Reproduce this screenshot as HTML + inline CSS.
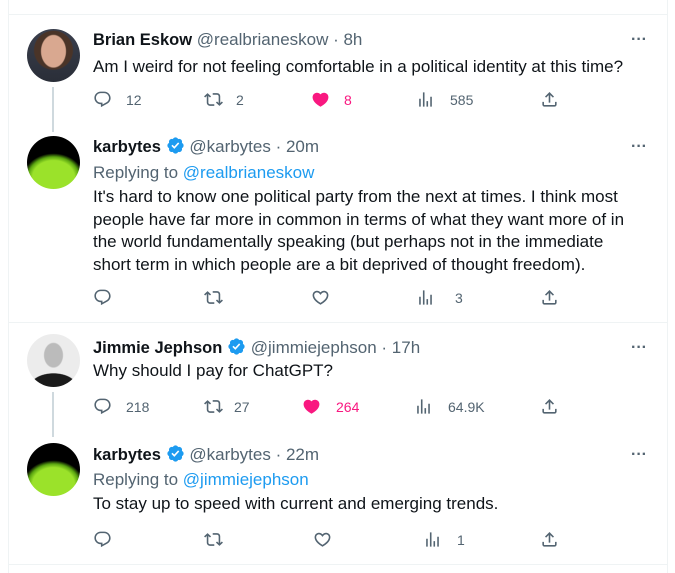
<!DOCTYPE html>
<html><head><meta charset="utf-8"><style>
*{margin:0;padding:0;box-sizing:border-box}
body{width:675px;height:573px;background:#fff;font-family:"Liberation Sans",Arial,sans-serif;color:#0f1419;position:relative;overflow:hidden}
.b{position:absolute;background:#eff3f4}
.av{position:absolute;left:27px;width:53px;height:53px;border-radius:50%;overflow:hidden}
.tl{position:absolute;left:52px;width:2px;background:#cfd9de}
.t{position:absolute;left:93px;width:560px;font-size:17px;line-height:22.6px;white-space:nowrap}
.n{font-weight:bold;font-size:16.5px}
.g{color:#536471}
.l{color:#1d9bf0}
.dots{position:absolute;left:631px;font-size:16px;color:#536471;font-weight:bold}
.ic{position:absolute;width:19px;height:19px}
.c{position:absolute;font-size:14px;color:#536471;line-height:20px}
.vb{display:inline-block;vertical-align:-3px}
</style></head><body>
<div class="b" style="left:8px;top:0;width:1px;height:573px"></div>
<div class="b" style="left:667px;top:0;width:1px;height:573px"></div>
<div class="b" style="left:8px;top:14px;width:660px;height:1px"></div>
<div class="b" style="left:8px;top:322px;width:660px;height:1px"></div>
<div class="b" style="left:8px;top:564px;width:660px;height:1px"></div>

<svg width="0" height="0" style="position:absolute"><defs>
<symbol id="rp" viewBox="0 0 24 24"><path fill="#536471" d="M1.751 10c0-4.42 3.584-8 8.005-8h4.366c4.49 0 8.129 3.64 8.129 8.13 0 2.96-1.607 5.68-4.196 7.110l-8.054 4.46v-3.690h-.067c-4.49.1-8.183-3.51-8.183-8.01zm8.005-6c-3.317 0-6.005 2.69-6.005 6 0 3.37 2.77 6.080 6.138 6.010l.351-.01h1.761v2.300l5.087-2.810c1.951-1.080 3.163-3.130 3.163-5.360 0-3.390-2.744-6.130-6.129-6.130H9.756z"/></symbol>
<symbol id="rt" viewBox="0 0 24 24"><path fill="#536471" d="M4.5 3.88l4.432 4.14-1.364 1.46L5.5 7.55V16c0 1.1.896 2 2 2H13v2H7.5c-2.209 0-4-1.79-4-4V7.55L1.432 9.48.068 8.02 4.5 3.88zM16.5 6H11V4h5.5c2.209 0 4 1.79 4 4v8.45l2.068-1.93 1.364 1.46-4.432 4.14-4.432-4.14 1.364-1.46 2.068 1.93V8c0-1.1-.896-2-2-2z"/></symbol>
<symbol id="lk" viewBox="0 0 24 24"><path fill="#536471" d="M16.697 5.5c-1.222-.06-2.679.51-3.89 2.16l-.805 1.09-.806-1.09C9.984 6.01 8.526 5.44 7.304 5.5c-1.243.07-2.349.78-2.91 1.910-.552 1.120-.633 2.780.479 4.820 1.074 1.970 3.257 4.270 7.129 6.610 3.870-2.340 6.052-4.640 7.126-6.610 1.111-2.040 1.030-3.700.477-4.820-.561-1.130-1.666-1.840-2.908-1.910zm4.187 7.690c-1.351 2.480-4.001 5.120-8.379 7.670l-.503.3-.504-.3c-4.379-2.550-7.029-5.190-8.382-7.670-1.360-2.500-1.410-4.860-.514-6.670.887-1.790 2.647-2.910 4.601-3.010 1.651-.09 3.368.56 4.798 2.010 1.429-1.450 3.146-2.100 4.796-2.010 1.954.1 3.714 1.220 4.601 3.010.896 1.810.846 4.170-.514 6.670z"/></symbol>
<symbol id="lkf" viewBox="0 0 24 24"><path fill="#f91880" d="M20.884 13.19c-1.351 2.48-4.001 5.12-8.379 7.67l-.503.3-.504-.3c-4.379-2.55-7.029-5.19-8.382-7.67-1.36-2.5-1.41-4.86-.514-6.67.887-1.79 2.647-2.91 4.601-3.01 1.651-.09 3.368.56 4.798 2.01 1.429-1.45 3.146-2.1 4.796-2.01 1.954.1 3.714 1.22 4.601 3.01.896 1.81.846 4.17-.514 6.67z"/></symbol>
<symbol id="vw" viewBox="0 0 24 24"><path fill="#536471" d="M8.75 21V3h2v18h-2zM18 21V8.5h2V21h-2zM4 21l.004-10h2L6 21H4zm9.248 0v-7h2v7h-2z"/></symbol>
<symbol id="sh" viewBox="0 0 24 24"><path fill="#536471" d="M12 2.59l5.7 5.7-1.41 1.42L13 6.41V16h-2V6.41l-3.3 3.3-1.41-1.42L12 2.59zM21 15l-.02 3.51c0 1.38-1.12 2.49-2.5 2.49H5.5C4.11 21 3 19.88 3 18.5V15h2v3.5c0 .28.22.5.5.5h12.98c.28 0 .5-.22.5-.5L19 15h2z"/></symbol>
<symbol id="vf" viewBox="0 0 22 22"><path fill="#1d9bf0" d="M20.396 11c-.018-.646-.215-1.275-.57-1.816-.354-.54-.852-.972-1.438-1.246.223-.607.27-1.264.14-1.897-.131-.634-.437-1.218-.882-1.687-.47-.445-1.053-.75-1.687-.882-.633-.13-1.29-.083-1.897.14-.273-.587-.704-1.086-1.245-1.44S11.647 1.62 11 1.604c-.646.017-1.273.213-1.813.568s-.969.854-1.24 1.44c-.608-.223-1.267-.272-1.902-.14-.635.13-1.22.436-1.69.882-.445.47-.749 1.055-.878 1.688-.13.633-.08 1.29.144 1.896-.587.274-1.087.705-1.443 1.245-.356.54-.555 1.17-.574 1.817.02.647.218 1.276.574 1.817.356.54.856.972 1.443 1.245-.224.606-.274 1.263-.144 1.896.13.634.433 1.218.877 1.688.47.443 1.054.747 1.687.878.633.132 1.29.084 1.897-.136.274.586.705 1.084 1.246 1.439.54.354 1.17.551 1.816.569.647-.016 1.276-.213 1.817-.567s.972-.854 1.245-1.44c.604.239 1.266.296 1.903.164.636-.132 1.220-.447 1.680-.907.46-.46.776-1.044.908-1.681s.075-1.299-.165-1.903c.586-.274 1.084-.705 1.439-1.246.354-.54.551-1.17.569-1.816z"/><path fill="#fff" d="M9.662 14.85l-3.429-3.428 1.293-1.302 2.072 2.072 4.4-4.794 1.347 1.246z"/></symbol>
</defs></svg>

<!-- avatars -->
<div class="av" style="top:29px;background:radial-gradient(ellipse 13px 17px at 50% 42%,#d9a890 0 12px,transparent 13px),radial-gradient(circle at 50% 40%,#4a3428 0 19px,transparent 20px),linear-gradient(#3a3f4d,#2a2e38)"></div>
<div class="tl" style="top:87px;height:45px"></div>
<div class="av" style="top:136px;background:radial-gradient(ellipse 30px 24px at 50% 78%,#9be22a 0 70%,#5aa510 85%,#000 100%),#000"></div>
<div class="av" style="top:334px;background:radial-gradient(ellipse 10px 13px at 50% 40%,#bbb 0 90%,transparent 100%),radial-gradient(ellipse 24px 14px at 50% 100%,#1a1a1a 0 95%,transparent 100%),#ececec"></div>
<div class="tl" style="top:392px;height:45px"></div>
<div class="av" style="top:443px;background:radial-gradient(ellipse 30px 24px at 50% 78%,#9be22a 0 70%,#5aa510 85%,#000 100%),#000"></div>

<!-- tweet1 -->
<div class="t" style="top:29px"><span class="n">Brian Eskow</span> <span class="g">@realbrianeskow · 8h</span></div>
<div class="dots" style="top:31px">···</div>
<div class="t" style="top:56px">Am I weird for not feeling comfortable in a political identity at this time?</div>

<!-- tweet2 -->
<div class="t" style="top:136px"><span class="n">karbytes</span> <svg class="vb" width="19" height="19"><use href="#vf"/></svg> <span class="g">@karbytes · 20m</span></div>
<div class="dots" style="top:138px">···</div>
<div class="t g" style="top:162px">Replying to <span class="l">@realbrianeskow</span></div>
<div class="t" style="top:186px">It's hard to know one political party from the next at times. I think most<br>people have far more in common in terms of what they want more of in<br>the world fundamentally speaking (but perhaps not in the immediate<br>short term in which people are a bit deprived of thought freedom).</div>

<!-- tweet3 -->
<div class="t" style="top:337px"><span class="n">Jimmie Jephson</span> <svg class="vb" width="19" height="19"><use href="#vf"/></svg> <span class="g">@jimmiejephson · 17h</span></div>
<div class="dots" style="top:339px">···</div>
<div class="t" style="top:360px">Why should I pay for ChatGPT?</div>

<!-- tweet4 -->
<div class="t" style="top:444px"><span class="n">karbytes</span> <svg class="vb" width="19" height="19"><use href="#vf"/></svg> <span class="g">@karbytes · 22m</span></div>
<div class="dots" style="top:446px">···</div>
<div class="t g" style="top:469px">Replying to <span class="l">@jimmiejephson</span></div>
<div class="t" style="top:493px">To stay up to speed with current and emerging trends.</div>

<!-- actions row1 -->
<svg class="ic" style="left:93px;top:90px"><use href="#rp"/></svg><div class="c" style="left:126px;top:90px">12</div>
<svg class="ic" style="left:204px;top:90px"><use href="#rt"/></svg><div class="c" style="left:236px;top:90px">2</div>
<svg class="ic" style="left:311px;top:90px"><use href="#lkf"/></svg><div class="c" style="left:344px;top:90px;color:#f91880">8</div>
<svg class="ic" style="left:416px;top:90px"><use href="#vw"/></svg><div class="c" style="left:450px;top:90px">585</div>
<svg class="ic" style="left:540px;top:90px"><use href="#sh"/></svg>

<!-- row2 -->
<svg class="ic" style="left:93px;top:288px"><use href="#rp"/></svg>
<svg class="ic" style="left:204px;top:288px"><use href="#rt"/></svg>
<svg class="ic" style="left:311px;top:288px"><use href="#lk"/></svg>
<svg class="ic" style="left:416px;top:288px"><use href="#vw"/></svg><div class="c" style="left:455px;top:288px">3</div>
<svg class="ic" style="left:540px;top:288px"><use href="#sh"/></svg>

<!-- row3 -->
<svg class="ic" style="left:93px;top:397px"><use href="#rp"/></svg><div class="c" style="left:126px;top:397px">218</div>
<svg class="ic" style="left:204px;top:397px"><use href="#rt"/></svg><div class="c" style="left:234px;top:397px">27</div>
<svg class="ic" style="left:302px;top:397px"><use href="#lkf"/></svg><div class="c" style="left:336px;top:397px;color:#f91880">264</div>
<svg class="ic" style="left:414px;top:397px"><use href="#vw"/></svg><div class="c" style="left:448px;top:397px">64.9K</div>
<svg class="ic" style="left:540px;top:397px"><use href="#sh"/></svg>

<!-- row4 -->
<svg class="ic" style="left:93px;top:530px"><use href="#rp"/></svg>
<svg class="ic" style="left:204px;top:530px"><use href="#rt"/></svg>
<svg class="ic" style="left:313px;top:530px"><use href="#lk"/></svg>
<svg class="ic" style="left:423px;top:530px"><use href="#vw"/></svg><div class="c" style="left:457px;top:530px">1</div>
<svg class="ic" style="left:540px;top:530px"><use href="#sh"/></svg>
</body></html>
